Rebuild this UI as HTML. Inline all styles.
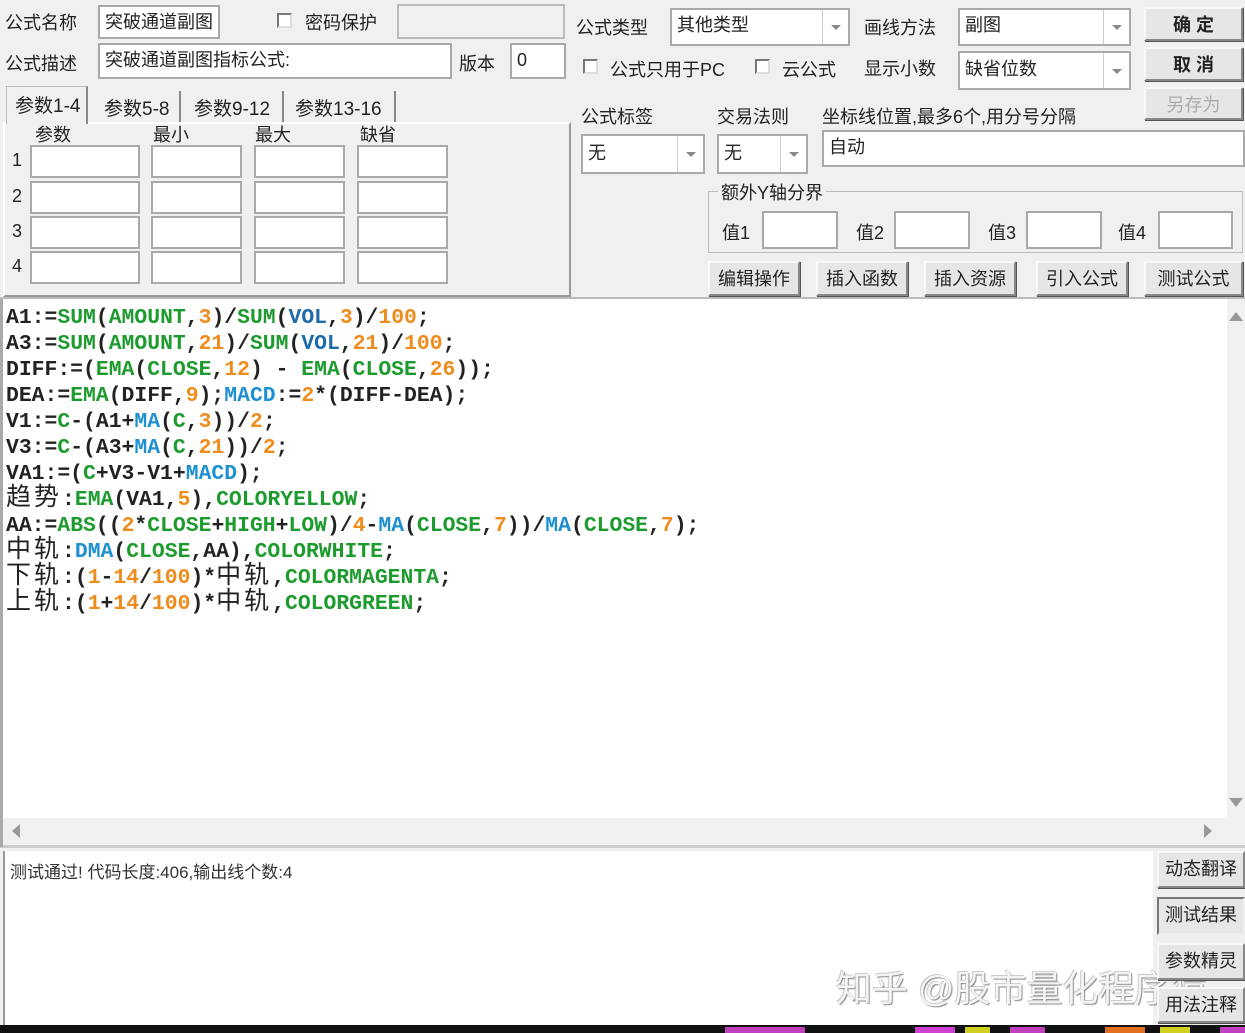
<!DOCTYPE html>
<html><head><meta charset="utf-8">
<style>
*{box-sizing:border-box;margin:0;padding:0}
body{width:1245px;height:1033px;background:#f0f0f0;position:relative;overflow:hidden;font-family:"Liberation Sans","Noto Sans CJK SC",sans-serif;color:#222;font-size:18px}
.a{position:absolute;white-space:nowrap}
.in{position:absolute;background:#fff;border:2px solid #a9a9a9;padding:2px 5px;font-size:18px;line-height:26px}
.cb{position:absolute;width:15px;height:15px;background:#fff;border:2px solid #777;border-right-color:#ddd;border-bottom-color:#ddd}
.btn{position:absolute;background:#e6e6e6;border:2px solid #888;border-top-color:#f8f8f8;border-left-color:#f8f8f8;box-shadow:1px 1px 0 #555;text-align:center;font-size:18px;line-height:32px}
.dd{position:absolute;top:0;right:0;bottom:0;width:26px;border-left:1px solid #ccc}
.dd:after{content:"";position:absolute;left:8px;top:50%;margin-top:-2px;border:5px solid transparent;border-top:5px solid #888;border-bottom:0}
.code{position:absolute;left:3px;top:299px;width:1224px;height:519px;background:#fff;font-family:"Liberation Mono",monospace;font-weight:bold;font-size:21.4px;line-height:26px;padding:6px 0 0 3px;letter-spacing:0}
.code div{height:26px;line-height:26px;white-space:pre;overflow:visible}
.g{color:#1e9b2e}.o{color:#f08c1c}.b{color:#1e90d2}.v{color:#1f6aa8}
.z{font-family:"Noto Sans CJK SC",sans-serif;font-weight:normal;font-size:25px;letter-spacing:3px;line-height:20px;display:inline-block;height:26px;vertical-align:top;position:relative;top:-2px}
.tab{position:absolute;top:91px;height:31px;border-right:2px solid #888;font-size:19px;padding-top:3px}
</style></head><body>
<div class="a" style="left:5px;top:9px">公式名称</div>
<div class="in" style="left:98px;top:5px;width:122px;height:34px">突破通道副图</div>
<div class="cb" style="left:277px;top:13px"></div>
<div class="a" style="left:305px;top:9px">密码保护</div>
<div class="in" style="left:397px;top:4px;width:168px;height:35px;background:#f0f0f0;border-color:#bbb"></div>
<div class="a" style="left:5px;top:50px">公式描述</div>
<div class="in" style="left:98px;top:43px;width:354px;height:36px">突破通道副图指标公式:</div>
<div class="a" style="left:459px;top:50px">版本</div>
<div class="in" style="left:510px;top:43px;width:56px;height:36px">0</div>
<div class="a" style="left:3px;top:122px;width:568px;height:175px;border:2px solid #bbb;border-top-color:#fff;border-left-color:#fff;border-right-color:#999;border-bottom-color:#999"></div>
<div class="a" style="left:6px;top:86px;width:82px;height:38px;border:1px solid #bbb;border-bottom:none;border-right:2px solid #888;background:#f0f0f0;font-size:19px;padding:4px 0 0 8px">参数1-4</div>
<div class="tab" style="left:90px;width:91px;padding-left:14px">参数5-8</div>
<div class="tab" style="left:183px;width:101px;padding-left:11px">参数9-12</div>
<div class="tab" style="left:286px;width:110px;padding-left:9px">参数13-16</div>
<div class="a" style="left:35px;top:121px;font-size:18px">参数</div>
<div class="a" style="left:153px;top:121px;font-size:18px">最小</div>
<div class="a" style="left:255px;top:121px;font-size:18px">最大</div>
<div class="a" style="left:360px;top:121px;font-size:18px">缺省</div>
<div class="a" style="left:12px;top:150px">1</div><div class="a" style="left:12px;top:186px">2</div><div class="a" style="left:12px;top:221px">3</div><div class="a" style="left:12px;top:256px">4</div>
<div class="in" style="left:30px;top:145px;width:110px;height:33px"></div><div class="in" style="left:151px;top:145px;width:91px;height:33px"></div><div class="in" style="left:254px;top:145px;width:91px;height:33px"></div><div class="in" style="left:357px;top:145px;width:91px;height:33px"></div>
<div class="in" style="left:30px;top:181px;width:110px;height:33px"></div><div class="in" style="left:151px;top:181px;width:91px;height:33px"></div><div class="in" style="left:254px;top:181px;width:91px;height:33px"></div><div class="in" style="left:357px;top:181px;width:91px;height:33px"></div>
<div class="in" style="left:30px;top:216px;width:110px;height:33px"></div><div class="in" style="left:151px;top:216px;width:91px;height:33px"></div><div class="in" style="left:254px;top:216px;width:91px;height:33px"></div><div class="in" style="left:357px;top:216px;width:91px;height:33px"></div>
<div class="in" style="left:30px;top:251px;width:110px;height:33px"></div><div class="in" style="left:151px;top:251px;width:91px;height:33px"></div><div class="in" style="left:254px;top:251px;width:91px;height:33px"></div><div class="in" style="left:357px;top:251px;width:91px;height:33px"></div>
<div class="a" style="left:576px;top:14px">公式类型</div>
<div class="in" style="left:670px;top:8px;width:180px;height:38px">其他类型<div class="dd"></div></div>
<div class="a" style="left:864px;top:14px">画线方法</div>
<div class="in" style="left:958px;top:8px;width:173px;height:38px">副图<div class="dd"></div></div>
<div class="btn" style="left:1144px;top:7px;width:99px;height:34px;font-weight:bold">确 定</div>
<div class="cb" style="left:583px;top:59px"></div>
<div class="a" style="left:610px;top:56px">公式只用于PC</div>
<div class="cb" style="left:755px;top:59px"></div>
<div class="a" style="left:782px;top:56px">云公式</div>
<div class="a" style="left:864px;top:55px">显示小数</div>
<div class="in" style="left:958px;top:51px;width:173px;height:39px;line-height:29px">缺省位数<div class="dd"></div></div>
<div class="btn" style="left:1144px;top:47px;width:99px;height:34px;font-weight:bold">取 消</div>
<div class="btn" style="left:1144px;top:87px;width:99px;height:33px;color:#aaa">另存为</div>
<div class="a" style="left:581px;top:103px">公式标签</div>
<div class="a" style="left:717px;top:103px">交易法则</div>
<div class="a" style="left:822px;top:103px">坐标线位置,最多6个,用分号分隔</div>
<div class="in" style="left:581px;top:134px;width:124px;height:40px;line-height:30px">无<div class="dd"></div></div>
<div class="in" style="left:717px;top:134px;width:91px;height:40px;line-height:30px">无<div class="dd"></div></div>
<div class="in" style="left:822px;top:130px;width:423px;height:37px">自动</div>
<div class="a" style="left:708px;top:191px;width:535px;height:62px;border:1px solid #bbb"></div>
<div class="a" style="left:718px;top:179px;background:#f0f0f0;padding:0 3px">额外Y轴分界</div>
<div class="a" style="left:722px;top:219px">值1</div><div class="in" style="left:762px;top:211px;width:76px;height:38px"></div>
<div class="a" style="left:856px;top:219px">值2</div><div class="in" style="left:894px;top:211px;width:76px;height:38px"></div>
<div class="a" style="left:988px;top:219px">值3</div><div class="in" style="left:1026px;top:211px;width:76px;height:38px"></div>
<div class="a" style="left:1118px;top:219px">值4</div><div class="in" style="left:1158px;top:211px;width:75px;height:38px"></div>
<div class="btn" style="left:708px;top:261px;width:92px;height:35px">编辑操作</div>
<div class="btn" style="left:816px;top:261px;width:92px;height:35px">插入函数</div>
<div class="btn" style="left:924px;top:261px;width:92px;height:35px">插入资源</div>
<div class="btn" style="left:1036px;top:261px;width:92px;height:35px">引入公式</div>
<div class="btn" style="left:1144px;top:261px;width:99px;height:35px">测试公式</div>
<div class="a" style="left:0;top:297px;width:1245px;height:2px;background:#bbb"></div>
<div class="code">
<div>A1:=<span class="g">SUM</span>(<span class="g">AMOUNT</span>,<span class="o">3</span>)/<span class="g">SUM</span>(<span class="v">VOL</span>,<span class="o">3</span>)/<span class="o">100</span>;</div>
<div>A3:=<span class="g">SUM</span>(<span class="g">AMOUNT</span>,<span class="o">21</span>)/<span class="g">SUM</span>(<span class="v">VOL</span>,<span class="o">21</span>)/<span class="o">100</span>;</div>
<div>DIFF:=(<span class="g">EMA</span>(<span class="g">CLOSE</span>,<span class="o">12</span>) - <span class="g">EMA</span>(<span class="g">CLOSE</span>,<span class="o">26</span>));</div>
<div>DEA:=<span class="g">EMA</span>(DIFF,<span class="o">9</span>);<span class="b">MACD</span>:=<span class="o">2</span>*(DIFF-DEA);</div>
<div>V1:=<span class="g">C</span>-(A1+<span class="b">MA</span>(<span class="g">C</span>,<span class="o">3</span>))/<span class="o">2</span>;</div>
<div>V3:=<span class="g">C</span>-(A3+<span class="b">MA</span>(<span class="g">C</span>,<span class="o">21</span>))/<span class="o">2</span>;</div>
<div>VA1:=(<span class="g">C</span>+V3-V1+<span class="b">MACD</span>);</div>
<div><span class="z">趋势</span>:<span class="g">EMA</span>(VA1,<span class="o">5</span>),<span class="g">COLORYELLOW</span>;</div>
<div>AA:=<span class="g">ABS</span>((<span class="o">2</span>*<span class="g">CLOSE</span>+<span class="g">HIGH</span>+<span class="g">LOW</span>)/<span class="o">4</span>-<span class="b">MA</span>(<span class="g">CLOSE</span>,<span class="o">7</span>))/<span class="b">MA</span>(<span class="g">CLOSE</span>,<span class="o">7</span>);</div>
<div><span class="z">中轨</span>:<span class="b">DMA</span>(<span class="g">CLOSE</span>,AA),<span class="g">COLORWHITE</span>;</div>
<div><span class="z">下轨</span>:(<span class="o">1</span>-<span class="o">14</span>/<span class="o">100</span>)*<span class="z">中轨</span>,<span class="g">COLORMAGENTA</span>;</div>
<div><span class="z">上轨</span>:(<span class="o">1</span>+<span class="o">14</span>/<span class="o">100</span>)*<span class="z">中轨</span>,<span class="g">COLORGREEN</span>;</div>
</div>
<div class="a" style="left:1227px;top:299px;width:18px;height:519px;background:#f0f0f0"></div>
<div class="a" style="left:1229px;top:312px;border:7px solid transparent;border-bottom:9px solid #999;border-top:0"></div>
<div class="a" style="left:1229px;top:798px;border:7px solid transparent;border-top:9px solid #999;border-bottom:0"></div>
<div class="a" style="left:12px;top:824px;border:7px solid transparent;border-right:8px solid #999;border-left:0"></div>
<div class="a" style="left:1204px;top:824px;border:7px solid transparent;border-left:8px solid #999;border-right:0"></div>
<div class="a" style="left:0;top:845px;width:1245px;height:3px;background:#ccc"></div>
<div class="a" style="left:0;top:299px;width:3px;height:548px;background:#aaa"></div>
<div class="a" style="left:3px;top:851px;width:1150px;height:174px;background:#fff;border-left:2px solid #999"></div>
<div class="a" style="left:10px;top:858px;font-size:17px;color:#333">测试通过! 代码长度:406,输出线个数:4</div>
<div class="a" style="left:836px;top:960px;font-size:36px;color:#f4f4f4;text-shadow:1px 1px 1px #888,-1px -1px 0 #ccc">知乎 @股市量化程序猿</div>
<div class="btn" style="left:1157px;top:851px;width:88px;height:37px">动态翻译</div>
<div class="btn" style="left:1157px;top:897px;width:88px;height:38px;border-top-color:#777;border-left-color:#777;border-right-color:#eee;border-bottom-color:#eee;box-shadow:none">测试结果</div>
<div class="btn" style="left:1157px;top:943px;width:88px;height:37px">参数精灵</div>
<div class="btn" style="left:1157px;top:987px;width:88px;height:36px">用法注释</div>
<div class="a" style="left:0;top:1025px;width:1245px;height:8px;background:#111"></div>
<div class="a" style="left:725px;top:1027px;width:80px;height:6px;background:#c040c0"></div>
<div class="a" style="left:915px;top:1027px;width:40px;height:6px;background:#d040d0"></div>
<div class="a" style="left:965px;top:1027px;width:25px;height:6px;background:#d0d020"></div>
<div class="a" style="left:1010px;top:1027px;width:35px;height:6px;background:#c040c0"></div>
<div class="a" style="left:1105px;top:1027px;width:40px;height:6px;background:#e07020"></div>
<div class="a" style="left:1160px;top:1027px;width:30px;height:6px;background:#d0d020"></div>
<div class="a" style="left:1220px;top:1027px;width:25px;height:6px;background:#c040c0"></div>
</body></html>
